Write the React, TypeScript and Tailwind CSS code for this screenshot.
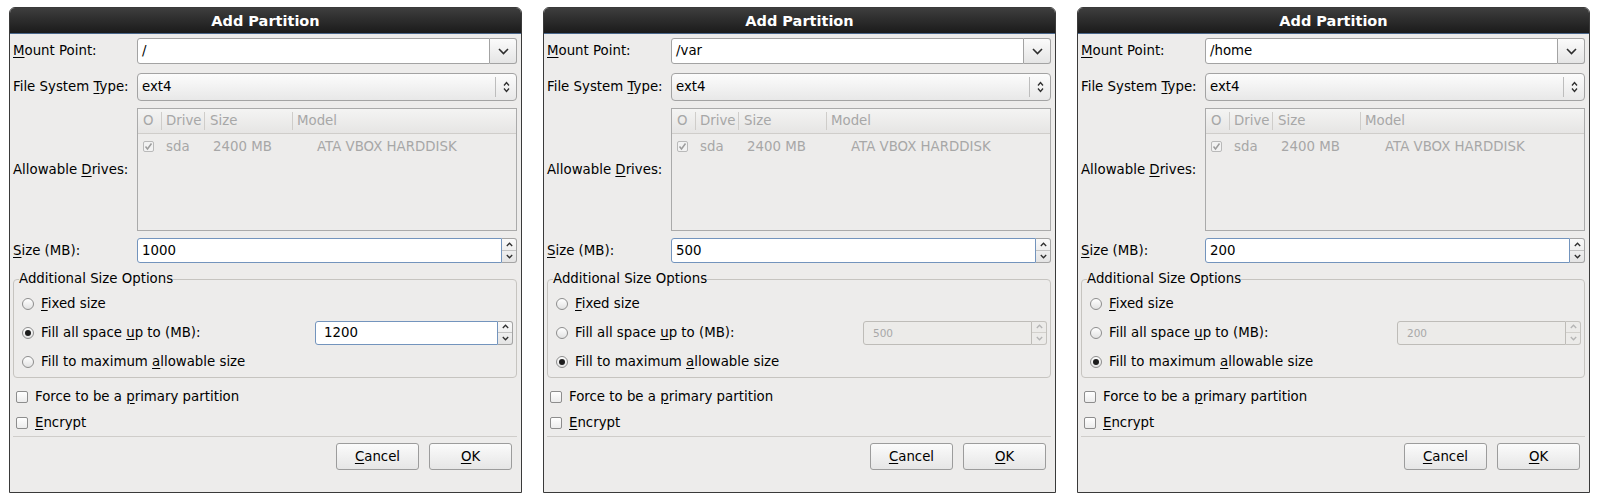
import React from 'react';

type DialogProps = {
  mount: string;
  size: string;
  fill: string;
  maxMode: boolean;
};

const Mn = ({ c }: { c: string }) => <span className="underline decoration-1 underline-offset-[2px]">{c}</span>;

function ChevronDown() {
  return (
    <svg width="11" height="7" viewBox="0 0 11 7">
      <polyline points="1,1 5.5,5.5 10,1" fill="none" stroke="#2e2e2e" strokeWidth="1.6" />
    </svg>
  );
}

function UpDown() {
  return (
    <svg width="7" height="12" viewBox="0 0 7 12">
      <polyline points="1,4.5 3.5,1.5 6,4.5" fill="none" stroke="#2e2e2e" strokeWidth="1.3" />
      <polyline points="1,7.5 3.5,10.5 6,7.5" fill="none" stroke="#2e2e2e" strokeWidth="1.3" />
    </svg>
  );
}

function Caret({ up, color }: { up: boolean; color: string }) {
  return (
    <svg width="7" height="5" viewBox="0 0 7 5">
      <polyline points={up ? '0.8,4 3.5,1.2 6.2,4' : '0.8,1 3.5,3.8 6.2,1'} fill="none" stroke={color} strokeWidth="1.3" />
    </svg>
  );
}

function Spin({ value, disabled, inset }: { value: string; disabled?: boolean; inset?: boolean }) {
  const arrow = disabled ? '#b4b4b4' : '#2e2e2e';
  return (
    <div className="flex h-full w-full">
      <div
        className={`flex flex-1 items-center rounded-l-[3px] border ${
          disabled ? 'border-[#bebcb8] bg-[#ecebe9] pl-[9px] text-[10.5px] text-[#a8a8a8]' : 'border-[#7394bd] bg-white text-black'
        } ${inset && !disabled ? 'pl-[8px]' : ''} ${!inset && !disabled ? 'pl-[4px]' : ''}`}
      >
        {value}
      </div>
      <div
        className={`flex w-[15px] flex-col rounded-r-[3px] border border-l-0 ${
          disabled ? 'border-[#c4c2be] bg-[#ecebe9]' : 'border-[#a4a4a4] bg-gradient-to-b from-[#fafafa] to-[#e4e4e4]'
        }`}
      >
        <span className={`flex flex-1 items-center justify-center border-b ${disabled ? 'border-[#d2d0cc]' : 'border-[#c2c2c2]'}`}>
          <Caret up color={arrow} />
        </span>
        <span className="flex flex-1 items-center justify-center">
          <Caret up={false} color={arrow} />
        </span>
      </div>
    </div>
  );
}

function Radio({ on }: { on: boolean }) {
  return (
    <span className="flex h-[12px] w-[12px] shrink-0 items-center justify-center rounded-full border border-[#8d8d8d] bg-gradient-to-b from-white to-[#e2e2e2]">
      {on && <span className="h-[6px] w-[6px] rounded-full bg-[#1c1c1c]" />}
    </span>
  );
}

function Check() {
  return <span className="h-[12px] w-[12px] shrink-0 rounded-[2px] border border-[#8d8d8d] bg-gradient-to-b from-white to-[#ececec]" />;
}

function Button({ children }: { children: React.ReactNode }) {
  return (
    <button className="flex h-[27px] w-[83px] items-center justify-center rounded-[3px] border border-[#9c9c9c] bg-gradient-to-b from-[#fbfbfb] to-[#e6e6e6] text-black">
      {children}
    </button>
  );
}

function AddPartition({ mount, size, fill, maxMode }: DialogProps) {
  return (
    <div className="flex w-[513px] flex-col rounded-t-[6px] border border-[#3a3a3a] bg-[#edeceb] font-['DejaVu_Sans','Liberation_Sans',sans-serif] text-[13.33px] leading-[16px] text-black">
      {/* Title bar */}
      <div className="flex h-[26px] items-center justify-center rounded-t-[5px] border-b border-[#49668a] bg-gradient-to-b from-[#3e3e3e] to-[#1b1b1b] text-[14.5px] font-bold text-white">
        Add Partition
      </div>

      <div className="flex flex-col pl-[3px] pr-[4px] pt-[4px]">
        {/* Mount point */}
        <div className="flex h-[26px] items-center">
          <div className="w-[124px] whitespace-nowrap">
            <Mn c="M" />ount Point:
          </div>
          <div className="flex h-full flex-1">
            <div className="flex flex-1 items-center rounded-l-[3px] border border-[#a3a3a3] bg-white pl-[4px]">{mount}</div>
            <div className="flex w-[27px] items-center justify-center rounded-r-[3px] border border-l-0 border-[#a3a3a3] bg-gradient-to-b from-[#fbfbfb] to-[#e5e5e5]">
              <ChevronDown />
            </div>
          </div>
        </div>

        {/* File system type */}
        <div className="mt-[9px] flex h-[28px] items-center">
          <div className="w-[124px] whitespace-nowrap">
            File System <Mn c="T" />ype:
          </div>
          <div className="flex h-full flex-1 items-center rounded-[4px] border border-[#a3a3a3] bg-gradient-to-b from-[#fcfcfc] to-[#e8e8e8] pl-[4px]">
            <span className="flex-1">ext4</span>
            <span className="h-[20px] w-px bg-[#bdbdbd]" />
            <span className="flex w-[20px] items-center justify-center">
              <UpDown />
            </span>
          </div>
        </div>

        {/* Allowable drives */}
        <div className="mt-[7px] flex h-[123px] items-center">
          <div className="w-[124px] whitespace-nowrap">
            Allowable <Mn c="D" />rives:
          </div>
          <div className="flex h-full flex-1 flex-col border border-[#aaaaaa] bg-[#edeceb] text-[#a7a7a7]">
            <div className="flex h-[25px] items-center border-b border-[#cfcdca] bg-gradient-to-b from-[#f4f4f3] to-[#e6e5e4]">
              <div className="w-[23px] pl-[5px]">O</div>
              <div className="flex w-[43px] items-center">
                <span className="h-[18px] w-px bg-[#cfcdca]" />
                <span className="pl-[4px]">Drive</span>
              </div>
              <div className="flex w-[88px] items-center">
                <span className="h-[18px] w-px bg-[#cfcdca]" />
                <span className="pl-[5px]">Size</span>
              </div>
              <div className="flex flex-1 items-center">
                <span className="h-[18px] w-px bg-[#cfcdca]" />
                <span className="pl-[4px]">Model</span>
              </div>
            </div>
            <div className="flex h-[25px] items-center">
              <div className="w-[23px] pl-[5px]">
                <span className="flex h-[11px] w-[11px] items-center justify-center rounded-[2px] border border-[#b9b9b9] bg-[#f2f2f2]">
                  <svg width="9" height="9" viewBox="0 0 9 9">
                    <polyline points="1.5,4.5 3.5,7 7.5,1.5" fill="none" stroke="#9d9d9d" strokeWidth="1.5" />
                  </svg>
                </span>
              </div>
              <div className="w-[43px] pl-[5px]">sda</div>
              <div className="w-[88px] whitespace-nowrap pl-[9px]">2400 MB</div>
              <div className="flex-1 whitespace-nowrap pl-[25px]">ATA VBOX HARDDISK</div>
            </div>
          </div>
        </div>

        {/* Size */}
        <div className="mt-[7px] flex h-[25px] items-center">
          <div className="w-[124px] whitespace-nowrap">
            <Mn c="S" />ize (MB):
          </div>
          <div className="h-full flex-1">
            <Spin value={size} />
          </div>
        </div>

        {/* Additional size options */}
        <fieldset className="mt-[8px] rounded-[4px] border border-[#c6c4c0] px-0 pb-[1px]">
          <legend className="ml-[5px] leading-[16px]">Additional Size Options</legend>
          <div className="flex flex-col pl-[8px] pr-[3px] pt-[2px]">
            <div className="flex h-[29px] items-center gap-[7px]">
              <Radio on={false} />
              <span>
                <Mn c="F" />ixed size
              </span>
            </div>
            <div className="flex h-[29px] items-center gap-[7px]">
              <Radio on={!maxMode} />
              <span className="flex-1 whitespace-nowrap">
                Fill all space <Mn c="u" />p to (MB):
              </span>
              <div className={`h-[24px] ${maxMode ? 'w-[184px]' : 'w-[198px]'}`}>
                <Spin value={fill} disabled={maxMode} inset />
              </div>
            </div>
            <div className="flex h-[29px] items-center gap-[7px]">
              <Radio on={maxMode} />
              <span>
                Fill to maximum <Mn c="a" />llowable size
              </span>
            </div>
          </div>
        </fieldset>

        {/* Checkboxes */}
        <div className="mt-[6px] flex h-[26px] items-center gap-[7px] pl-[3px]">
          <Check />
          <span>
            Force to be a <Mn c="p" />rimary partition
          </span>
        </div>
        <div className="flex h-[26px] items-center gap-[7px] pl-[3px]">
          <Check />
          <span>
            <Mn c="E" />ncrypt
          </span>
        </div>

        {/* Buttons */}
        <div className="flex justify-end gap-[10px] border-t border-[#cfcdca] pb-[10px] pr-[5px] pt-[6px]">
          <Button>
            <Mn c="C" />ancel
          </Button>
          <Button>
            <Mn c="O" />K
          </Button>
        </div>
      </div>
    </div>
  );
}

export default function App() {
  return (
    <div className="flex h-[493px] w-[1600px] gap-[21px] bg-white pl-[9px] pt-[7px]">
      <AddPartition mount="/" size="1000" fill="1200" maxMode={false} />
      <AddPartition mount="/var" size="500" fill="500" maxMode />
      <AddPartition mount="/home" size="200" fill="200" maxMode />
    </div>
  );
}
